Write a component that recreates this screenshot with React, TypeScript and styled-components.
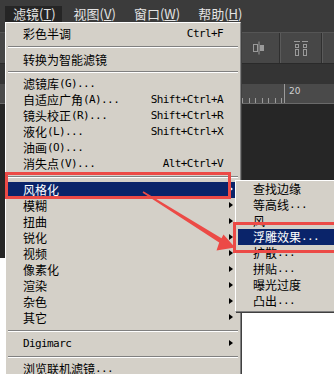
import React from "react";
import styled, { createGlobalStyle, css } from "styled-components";

const GlobalStyle = createGlobalStyle`
  html, body {
    margin: 0;
    padding: 0;
    background: #262626;
    overflow: hidden;
  }
`;

const CJK = `"Noto Sans CJK SC", "Noto Sans", sans-serif`;
const MONO = `"DejaVu Sans Mono", "Liberation Mono", monospace`;

const Workspace = styled.div`
  position: relative;
  width: 334px;
  height: 374px;
  overflow: hidden;
  display: flex;
  flex-direction: column;
  background: #262626;
  font-family: ${CJK};
`;

/* ---------- application chrome behind the menus ---------- */

const MenuBar = styled.div`
  height: 22px;
  flex: none;
  display: flex;
  align-items: flex-end;
  gap: 4px;
  padding-left: 5px;
  background: #3b3b3b;
`;

const MenuTitle = styled.div<{ $open?: boolean }>`
  height: 16px;
  padding: 0 6px 0 8px;
  display: flex;
  align-items: center;
  font-size: 13px;
  line-height: 16px;
  color: #e4e4e4;
  background: ${(p) => (p.$open ? "#252525" : "transparent")};
  u {
    text-decoration: underline;
    text-underline-offset: 1px;
  }
`;

const OptionsBar = styled.div`
  height: 41px;
  flex: none;
  display: flex;
  flex-direction: column;
  justify-content: flex-end;
  background: #3b3b3b;
`;

const ToolStrip = styled.div`
  height: 30px;
  border-top: 1px solid #555;
  background: #474747;
  display: flex;
  align-items: center;
  justify-content: flex-end;
`;

const ToolGroup = styled.div<{ $w: number }>`
  width: ${(p) => p.$w}px;
  height: 30px;
  display: flex;
  align-items: center;
  justify-content: center;
  border-left: 1px solid #2f2f2f;
  box-shadow: inset 1px 0 #5a5a5a;
`;

const TabBar = styled.div`
  height: 20px;
  flex: none;
  background: #343434;
  border-top: 1px solid #2a2a2a;
`;

const Ruler = styled.div`
  height: 19px;
  flex: none;
  position: relative;
  background: #4a4a4a;
  border-bottom: 1px solid #6a6a6a;
  display: flex;
  align-items: flex-end;
  justify-content: flex-end;
  font-family: "DejaVu Sans", sans-serif;
  font-size: 9px;
  color: #d0d0d0;
`;

const RulerMark = styled.div`
  width: 50px;
  height: 19px;
  border-left: 1px solid #9a9a9a;
  padding-left: 4px;
  box-sizing: border-box;
  line-height: 14px;
`;

const Ticks = styled.div`
  width: 100px;
  height: 5px;
  background: repeating-linear-gradient(
    to right,
    #9a9a9a 0 1px,
    transparent 1px 6.5px
  );
`;

const CanvasArea = styled.div`
  flex: 1;
  display: flex;
  flex-direction: column;
  justify-content: flex-end;
  background: #262626;
`;

const DocumentSheet = styled.div`
  height: 116px;
  background: #ffffff;
`;

/* ---------- classic dropdown menus ---------- */

const MenuPanel = styled.div<{ $left: number; $top: number; $w: number }>`
  position: absolute;
  left: ${(p) => p.$left}px;
  top: ${(p) => p.$top}px;
  width: ${(p) => p.$w}px;
  box-sizing: border-box;
  background: #d4d0c8;
  border-left: 1px solid #ffffff;
  border-top: 1px solid #ffffff;
  border-right: 1px solid #808080;
  border-bottom: 1px solid #808080;
  box-shadow: 1px 1px 0 #404040;
  display: flex;
  flex-direction: column;
`;

const MainMenu = styled(MenuPanel)`
  padding: 3px 2px 2px 2px;
`;

const SubMenu = styled(MenuPanel)`
  padding: 0 2px 2px 2px;
`;

const Row = styled.div<{ $active?: boolean; $pad: number }>`
  position: relative;
  height: 16px;
  display: flex;
  align-items: center;
  padding: 0 15px 0 ${(p) => p.$pad}px;
  font-size: 12px;
  line-height: 16px;
  color: #000;
  white-space: nowrap;
  ${(p) =>
    p.$active &&
    css`
      background: #0a246a;
      color: #fff;
    `}
`;

const Latin = styled.span`
  font-family: ${MONO};
  font-size: 11px;
  letter-spacing: -0.6px;
`;

const Shortcut = styled.span`
  margin-left: auto;
  font-family: ${MONO};
  font-size: 11px;
  letter-spacing: -0.6px;
`;

const SubArrow = styled.span<{ $active?: boolean }>`
  position: absolute;
  right: 5px;
  top: 4px;
  width: 0;
  height: 0;
  border-top: 3.5px solid transparent;
  border-bottom: 3.5px solid transparent;
  border-left: 4px solid ${(p) => (p.$active ? "#fff" : "#000")};
`;

const Separator = styled.div<{ $h: number }>`
  height: ${(p) => p.$h}px;
  display: flex;
  align-items: center;
  &::after {
    content: "";
    flex: 1;
    height: 1px;
    border-top: 1px solid #808080;
    border-bottom: 1px solid #ffffff;
    height: 0;
  }
`;

/* ---------- red annotation marks ---------- */

const MarkBox = styled.div<{ $x: number; $y: number; $w: number; $h: number }>`
  position: absolute;
  left: ${(p) => p.$x}px;
  top: ${(p) => p.$y}px;
  width: ${(p) => p.$w}px;
  height: ${(p) => p.$h}px;
  box-sizing: border-box;
  border: 3px solid #ec4a46;
  pointer-events: none;
`;

const MarkLayer = styled.svg`
  position: absolute;
  left: 0;
  top: 0;
  pointer-events: none;
`;

type Entry =
  | { sep: number }
  | { label: string; shortcut?: string; sub?: boolean; active?: boolean };

const filterItems: Entry[] = [
  { label: "彩色半调", shortcut: "Ctrl+F" },
  { sep: 10 },
  { label: "转换为智能滤镜" },
  { sep: 8 },
  { label: "滤镜库(G)..." },
  { label: "自适应广角(A)...", shortcut: "Shift+Ctrl+A" },
  { label: "镜头校正(R)...", shortcut: "Shift+Ctrl+R" },
  { label: "液化(L)...", shortcut: "Shift+Ctrl+X" },
  { label: "油画(O)..." },
  { label: "消失点(V)...", shortcut: "Alt+Ctrl+V" },
  { sep: 10 },
  { label: "风格化", sub: true, active: true },
  { label: "模糊", sub: true },
  { label: "扭曲", sub: true },
  { label: "锐化", sub: true },
  { label: "视频", sub: true },
  { label: "像素化", sub: true },
  { label: "渲染", sub: true },
  { label: "杂色", sub: true },
  { label: "其它", sub: true },
  { sep: 10 },
  { label: "Digimarc", sub: true },
  { sep: 9 },
  { label: "浏览联机滤镜..." },
];

const stylizeItems: Entry[] = [
  { label: "查找边缘" },
  { label: "等高线..." },
  { label: "风..." },
  { label: "浮雕效果...", active: true },
  { label: "扩散..." },
  { label: "拼贴..." },
  { label: "曝光过度" },
  { label: "凸出..." },
];

// latin runs get the narrow monospace face, like the bitmap UI font
const renderLabel = (text: string) =>
  text.split(/([\u0000-\u00ff]+)/).map((part, i) =>
    /^[\u0000-\u00ff]+$/.test(part) ? <Latin key={i}>{part}</Latin> : part
  );

const MenuEntries = ({ items, pad }: { items: Entry[]; pad: number }) => (
  <>
    {items.map((item, i) =>
      "sep" in item ? (
        <Separator key={i} $h={item.sep} />
      ) : (
        <Row key={i} $active={item.active} $pad={pad}>
          {renderLabel(item.label)}
          {item.shortcut && <Shortcut>{item.shortcut}</Shortcut>}
          {item.sub && <SubArrow $active={item.active} />}
        </Row>
      )
    )}
  </>
);

const AlignIcon = () => (
  <svg width="16" height="14" viewBox="0 0 16 14" fill="none" stroke="#9a9a9a">
    <path d="M8 0.5v13" />
    <rect x="2.5" y="3.5" width="4" height="7" />
    <rect x="9.5" y="4.5" width="3" height="5" fill="#9a9a9a" />
  </svg>
);

const DistributeIcon = () => (
  <svg width="16" height="16" viewBox="0 0 16 16" fill="none" stroke="#9a9a9a">
    <path d="M1 1.5h6M9 1.5h6" />
    <rect x="2.5" y="4.5" width="3" height="3" />
    <rect x="10.5" y="4.5" width="3" height="3" />
    <rect x="2.5" y="9.5" width="3" height="6" />
    <rect x="10.5" y="9.5" width="3" height="6" />
  </svg>
);

export default function App() {
  return (
    <>
      <GlobalStyle />
      <Workspace>
        <MenuBar>
          <MenuTitle $open>
            滤镜(<u>T</u>)
          </MenuTitle>
          <MenuTitle>
            视图(<u>V</u>)
          </MenuTitle>
          <MenuTitle>
            窗口(<u>W</u>)
          </MenuTitle>
          <MenuTitle>
            帮助(<u>H</u>)
          </MenuTitle>
        </MenuBar>
        <OptionsBar>
          <ToolStrip>
            <ToolGroup $w={40}>
              <AlignIcon />
            </ToolGroup>
            <ToolGroup $w={41}>
              <DistributeIcon />
            </ToolGroup>
            <ToolGroup $w={12} />
          </ToolStrip>
        </OptionsBar>
        <TabBar />
        <Ruler>
          <Ticks />
          <RulerMark>20</RulerMark>
        </Ruler>
        <CanvasArea>
          <DocumentSheet />
        </CanvasArea>

        <MainMenu $left={5} $top={22} $w={236}>
          <MenuEntries items={filterItems} pad={15} />
        </MainMenu>

        <SubMenu $left={235} $top={180} $w={120}>
          <MenuEntries items={stylizeItems} pad={15} />
        </SubMenu>

        <MarkBox $x={5} $y={172} $w={226} $h={27} />
        <MarkBox $x={233} $y={222} $w={104} $h={31} />
        <MarkLayer width="334" height="374" viewBox="0 0 334 374">
          <polygon
            fill="#ec4a46"
            points="143.4,191.3 221.5,238.2 223.5,234.5 235,247.5 216.5,250.5 219.2,242.4 142.6,192.7"
          />
        </MarkLayer>
      </Workspace>
    </>
  );
}
